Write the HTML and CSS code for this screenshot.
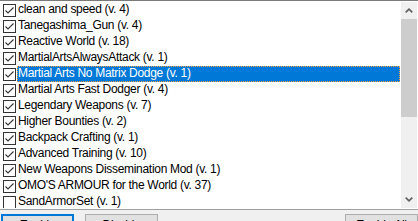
FILE: index.html
```html
<!DOCTYPE html>
<html>
<head>
<meta charset="utf-8">
<link rel="stylesheet" href="styles.css">
</head>
<body>
<div class="listbox">
  <div class="items">
    <div class="row"><span class="cb"><svg width="13" height="13" viewBox="0 0 13 13"><path d="M2.5 6.5 L5 9 L10.5 3.5" fill="none" stroke="#333" stroke-width="1.1"/></svg></span><span class="label">clean and speed (v. 4)</span></div>
    <div class="row"><span class="cb"><svg width="13" height="13" viewBox="0 0 13 13"><path d="M2.5 6.5 L5 9 L10.5 3.5" fill="none" stroke="#333" stroke-width="1.1"/></svg></span><span class="label">Tanegashima_Gun (v. 4)</span></div>
    <div class="row"><span class="cb"><svg width="13" height="13" viewBox="0 0 13 13"><path d="M2.5 6.5 L5 9 L10.5 3.5" fill="none" stroke="#333" stroke-width="1.1"/></svg></span><span class="label">Reactive World (v. 18)</span></div>
    <div class="row"><span class="cb"><svg width="13" height="13" viewBox="0 0 13 13"><path d="M2.5 6.5 L5 9 L10.5 3.5" fill="none" stroke="#333" stroke-width="1.1"/></svg></span><span class="label">MartialArtsAlwaysAttack (v. 1)</span></div>
    <div class="row selected"><span class="cb"><svg width="13" height="13" viewBox="0 0 13 13"><path d="M2.5 6.5 L5 9 L10.5 3.5" fill="none" stroke="#333" stroke-width="1.1"/></svg></span><span class="label">Martial Arts No Matrix Dodge (v. 1)</span></div>
    <div class="row"><span class="cb"><svg width="13" height="13" viewBox="0 0 13 13"><path d="M2.5 6.5 L5 9 L10.5 3.5" fill="none" stroke="#333" stroke-width="1.1"/></svg></span><span class="label">Martial Arts Fast Dodger (v. 4)</span></div>
    <div class="row"><span class="cb"><svg width="13" height="13" viewBox="0 0 13 13"><path d="M2.5 6.5 L5 9 L10.5 3.5" fill="none" stroke="#333" stroke-width="1.1"/></svg></span><span class="label">Legendary Weapons (v. 7)</span></div>
    <div class="row"><span class="cb"><svg width="13" height="13" viewBox="0 0 13 13"><path d="M2.5 6.5 L5 9 L10.5 3.5" fill="none" stroke="#333" stroke-width="1.1"/></svg></span><span class="label">Higher Bounties (v. 2)</span></div>
    <div class="row"><span class="cb"><svg width="13" height="13" viewBox="0 0 13 13"><path d="M2.5 6.5 L5 9 L10.5 3.5" fill="none" stroke="#333" stroke-width="1.1"/></svg></span><span class="label">Backpack Crafting (v. 1)</span></div>
    <div class="row"><span class="cb"><svg width="13" height="13" viewBox="0 0 13 13"><path d="M2.5 6.5 L5 9 L10.5 3.5" fill="none" stroke="#333" stroke-width="1.1"/></svg></span><span class="label">Advanced Training (v. 10)</span></div>
    <div class="row"><span class="cb"><svg width="13" height="13" viewBox="0 0 13 13"><path d="M2.5 6.5 L5 9 L10.5 3.5" fill="none" stroke="#333" stroke-width="1.1"/></svg></span><span class="label">New Weapons Dissemination Mod (v. 1)</span></div>
    <div class="row"><span class="cb"><svg width="13" height="13" viewBox="0 0 13 13"><path d="M2.5 6.5 L5 9 L10.5 3.5" fill="none" stroke="#333" stroke-width="1.1"/></svg></span><span class="label">OMO'S ARMOUR for the World (v. 37)</span></div>
    <div class="row"><span class="cb"></span><span class="label">SandArmorSet (v. 1)</span></div>
  </div>
  <div class="scrollbar">
    <div class="sb-btn"><svg width="8" height="5" viewBox="0 0 8 5"><path d="M0.7 4.3 L4 1.2 L7.3 4.3" fill="none" stroke="#606060" stroke-width="1.7"/></svg></div>
    <div class="sb-thumb"></div>
    <div class="sb-track"></div>
    <div class="sb-btn"><svg width="8" height="5" viewBox="0 0 8 5"><path d="M0.7 0.7 L4 3.8 L7.3 0.7" fill="none" stroke="#606060" stroke-width="1.7"/></svg></div>
  </div>
</div>
<div class="buttons">
  <div class="btn default b1">Enable</div>
  <div class="btn b2">Disable</div>
  <div class="spacer"></div>
  <div class="btn b3">Enable All</div>
</div>
</body>
</html>
```
FILE: styles.css
```css
html, body {
  margin: 0;
  padding: 0;
}
body {
  width: 418px;
  height: 221px;
  overflow: hidden;
  background: #f0f0f0;
  font-family: "Liberation Sans", Arial, sans-serif;
  font-size: 12px;
  letter-spacing: -0.3px;
  color: #000;
}
.listbox {
  display: flex;
  height: 206px;
  padding: 1px 0;
  background: #fff;
  border-top: 1px solid #7a7a7a;
  border-bottom: 1px solid #a0a0a0;
}
.items {
  flex: 1;
  overflow: hidden;
}
.row {
  display: flex;
  align-items: center;
  height: 16px;
  white-space: nowrap;
}
.cb {
  flex: none;
  width: 13px;
  height: 13px;
  box-sizing: border-box;
  border: 1px solid #333;
  margin-left: 3px;
  margin-right: 1px;
  background: #fff;
  display: flex;
  align-items: center;
  justify-content: center;
}
.cb svg {
  flex: none;
  display: block;
}
.label {
  display: block;
  height: 16px;
  line-height: 15px;
  padding-left: 1px;
  flex: 1;
  box-sizing: border-box;
}
.row.selected .label {
  background: #0078d7;
  color: #fff;
  outline: 1px dotted #f0a040;
  outline-offset: -1px;
  margin-right: 1px;
}
.scrollbar {
  flex: none;
  width: 16px;
  margin-right: 1px;
  display: flex;
  flex-direction: column;
  background: #f0f0f0;
}
.sb-btn {
  height: 17px;
  display: flex;
  align-items: center;
  justify-content: center;
}
.sb-thumb {
  height: 98px;
  background: #cdcdcd;
}
.sb-track {
  flex: 1;
}
.buttons {
  display: flex;
  padding-top: 4px;
  padding-left: 1px;
}
.btn {
  flex: none;
  width: 73px;
  height: 23px;
  box-sizing: border-box;
  border: 1px solid #adadad;
  background: #e1e1e1;
  text-align: center;
  padding-top: 2px;
  line-height: 17px;
  white-space: nowrap;
}
.btn.default {
  border-color: #0078d7;
  box-shadow: inset 0 0 0 1px #0078d7;
}
.b2 { margin-left: 11px; }
.spacer { flex: 1; }
```
